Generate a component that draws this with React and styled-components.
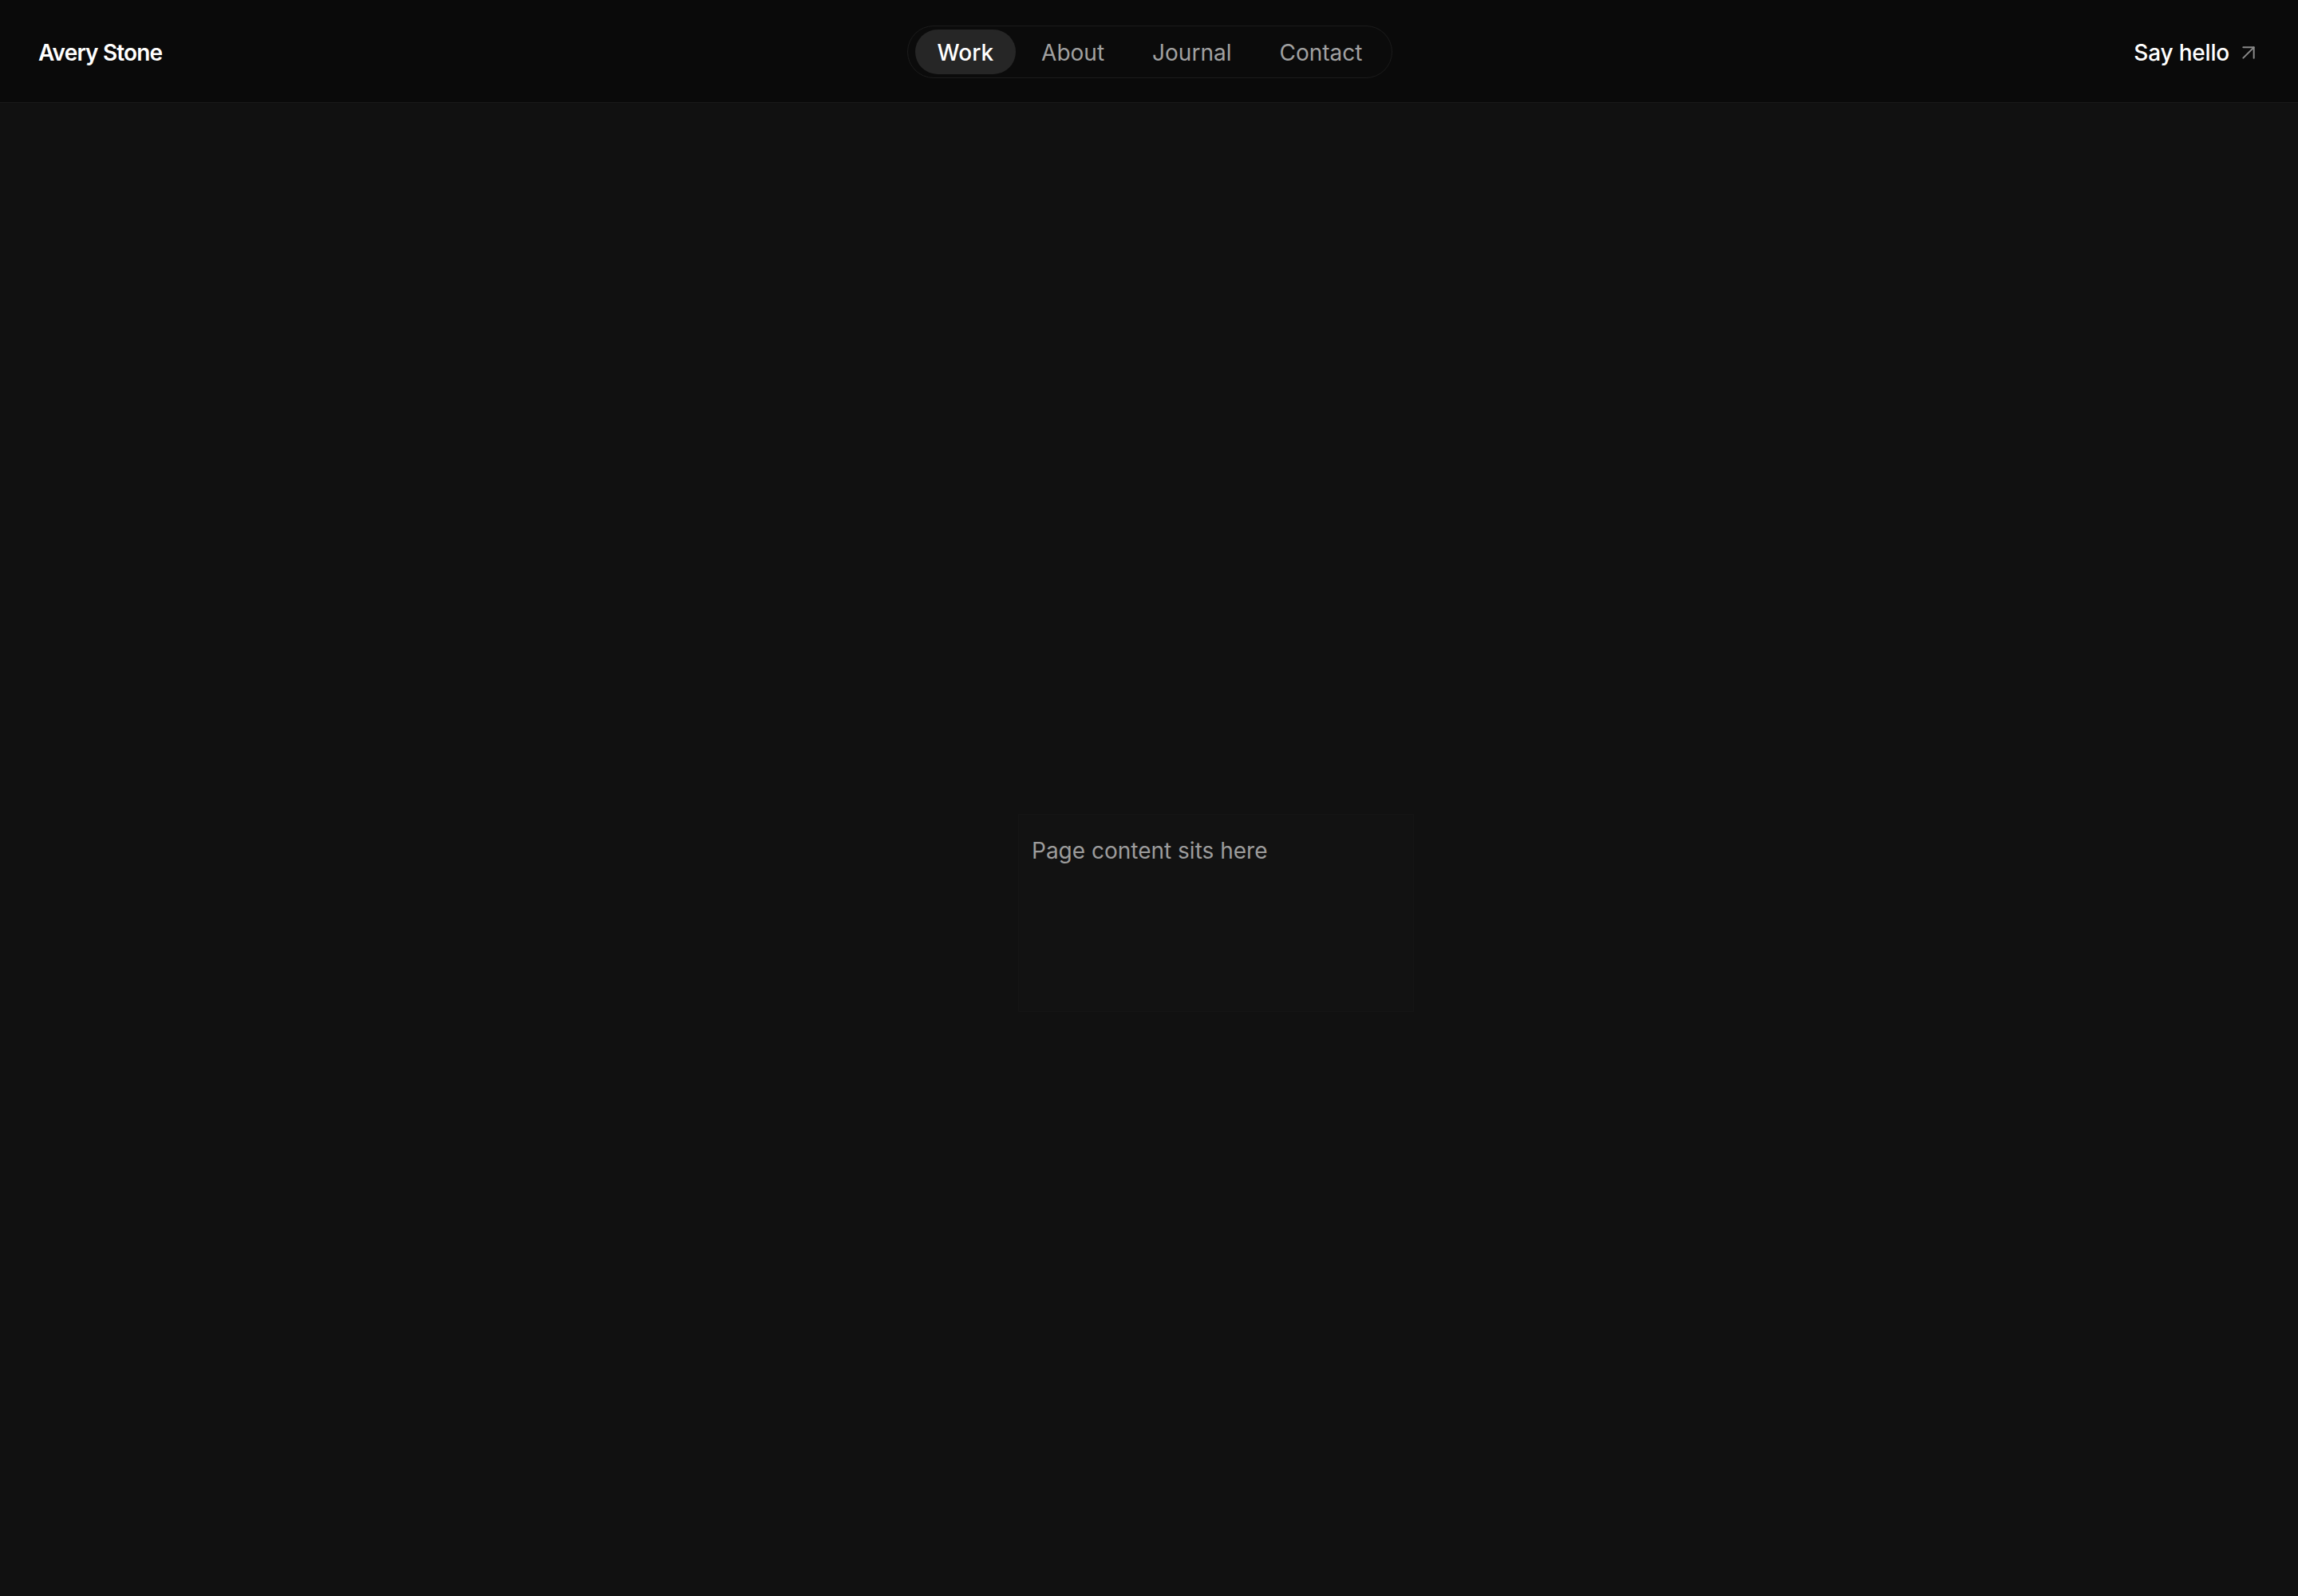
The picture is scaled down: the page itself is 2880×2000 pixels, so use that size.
import React from "react";
import styled, { createGlobalStyle } from "styled-components";
import { ArrowUpRight } from "lucide-react";

const GlobalStyle = createGlobalStyle`
  html, body {
    margin: 0;
    padding: 0;
    background: #111111;
  }
  body {
    font-family: Inter, "Noto Sans", "Liberation Sans", sans-serif;
    color: #fafafa;
    -webkit-font-smoothing: antialiased;
  }
  * { box-sizing: border-box; }
`;

const Page = styled.div`
  min-height: 2000px;
  display: flex;
  flex-direction: column;
  background: #111111;
`;

const Header = styled.header`
  height: 129px;
  padding: 3px 46px 0 48px;
  display: grid;
  grid-template-columns: 1fr auto 1fr;
  align-items: center;
  background: #0a0a0a;
  border-bottom: 1px solid #1a1a1a;
`;

const Logo = styled.a`
  justify-self: start;
  font-size: 28px;
  font-weight: 600;
  letter-spacing: -0.85px;
  color: #ffffff;
  text-decoration: none;
`;

const Nav = styled.nav`
  display: flex;
  align-items: center;
  gap: 4px;
  margin-top: -2px;
  padding: 4px 9px;
  border: 1px solid #1c1c1c;
  border-radius: 999px;
  background: #0b0b0b;
`;

const NavItem = styled.a`
  height: 56px;
  display: inline-flex;
  align-items: center;
  padding: 2px 28px 0;
  border-radius: 999px;
  font-size: 28px;
  font-weight: ${(p) => (p.$active ? 500 : 400)};
  color: ${(p) => (p.$active ? "#ffffff" : "#a1a1a1")};
  background: ${(p) => (p.$active ? "#262626" : "transparent")};
  text-decoration: none;
`;

const Cta = styled.a`
  justify-self: end;
  display: inline-flex;
  align-items: center;
  gap: 8px;
  font-size: 28px;
  font-weight: 500;
  letter-spacing: -0.2px;
  color: #ffffff;
  text-decoration: none;

  svg {
    color: #8a8a8a;
  }
`;

const Main = styled.main`
  flex: 1;
  display: flex;
  align-items: center;
  justify-content: center;
  padding: 158px 0 0 168px;
`;

const ContentBox = styled.section`
  width: 496px;
  height: 248px;
  padding: 24px 16px;
  background: #121212;
  border: 1px solid rgba(255, 255, 255, 0.015);
`;

const Placeholder = styled.p`
  margin: 0;
  font-size: 28px;
  font-weight: 400;
  color: #9c9c9c;
  line-height: 1.5;
`;

const links = ["Work", "About", "Journal", "Contact"];

export default function App() {
  return (
    <>
      <GlobalStyle />
      <Page>
        <Header>
          <Logo href="#">Avery Stone</Logo>
          <Nav>
            {links.map((l) => (
              <NavItem key={l} href="#" $active={l === "Work"}>
                {l}
              </NavItem>
            ))}
          </Nav>
          <Cta href="#">
            Say hello
            <ArrowUpRight size={32} strokeWidth={1.5} />
          </Cta>
        </Header>
        <Main>
          <ContentBox>
            <Placeholder>Page content sits here</Placeholder>
          </ContentBox>
        </Main>
      </Page>
    </>
  );
}
